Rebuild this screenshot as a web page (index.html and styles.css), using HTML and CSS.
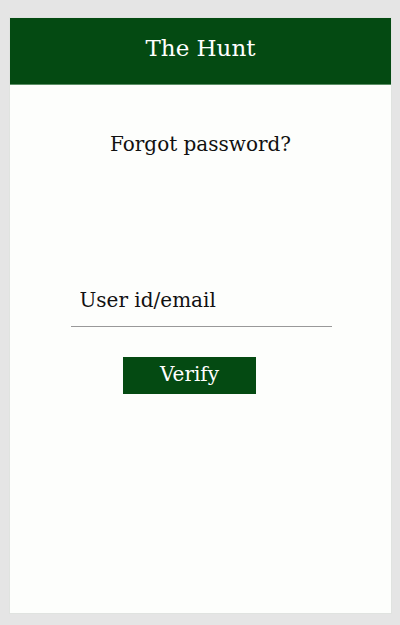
FILE: index.html
```html
<!DOCTYPE html>
<html>
<head>
<meta charset="utf-8">
<link rel="stylesheet" href="styles.css">
</head>
<body>
<div class="card">
  <header class="header"><h1 class="title">The Hunt</h1></header>
  <main class="content">
    <h2 class="heading">Forgot password?</h2>
    <div class="field">
      <input class="input" type="text" placeholder="User id/email">
    </div>
    <button class="btn">Verify</button>
  </main>
</div>
</body>
</html>
```
FILE: styles.css
```css
html, body { margin: 0; padding: 0; }
body {
  background: #e5e5e5;
  width: 400px;
  height: 625px;
  overflow: hidden;
  font-family: "DejaVu Serif", serif;
}
.card {
  margin: 17px 0 0 9px;
  width: 381px;
  height: 595px;
  background: #fdfefc;
  border: 1px solid #e0e3e0;
  display: flex;
  flex-direction: column;
}
.header {
  height: 66px;
  background: #044a12;
  border-bottom: 1px solid #5c8e66;
  display: flex;
  align-items: center;
  justify-content: center;
}
.title {
  margin: 0 0 7px;
  color: #fff;
  font-weight: normal;
  font-size: 23px;
}
.content {
  display: flex;
  flex-direction: column;
  align-items: center;
}
.heading {
  margin: 48px 0 0;
  font-weight: normal;
  font-size: 20px;
  line-height: 23px;
  color: #111;
}
.field {
  margin-top: 132px;
  width: 261px;
  margin-left: 1px;
  border-bottom: 1px solid #999;
}
.input {
  display: block;
  border: 0;
  outline: none;
  width: 100%;
  box-sizing: border-box;
  height: 38px;
  line-height: 23px;
  padding: 0 0 15px 9px;
  font-family: inherit;
  font-size: 20px;
  background: transparent;
}
.input::placeholder { color: #111; opacity: 1; }
.btn {
  margin-top: 30px;
  margin-left: -22px;
  width: 133px;
  height: 37px;
  border: 0;
  background: #044a12;
  color: #fff;
  font-family: inherit;
  font-size: 20px;
  padding: 0 0 3px;
}
```
